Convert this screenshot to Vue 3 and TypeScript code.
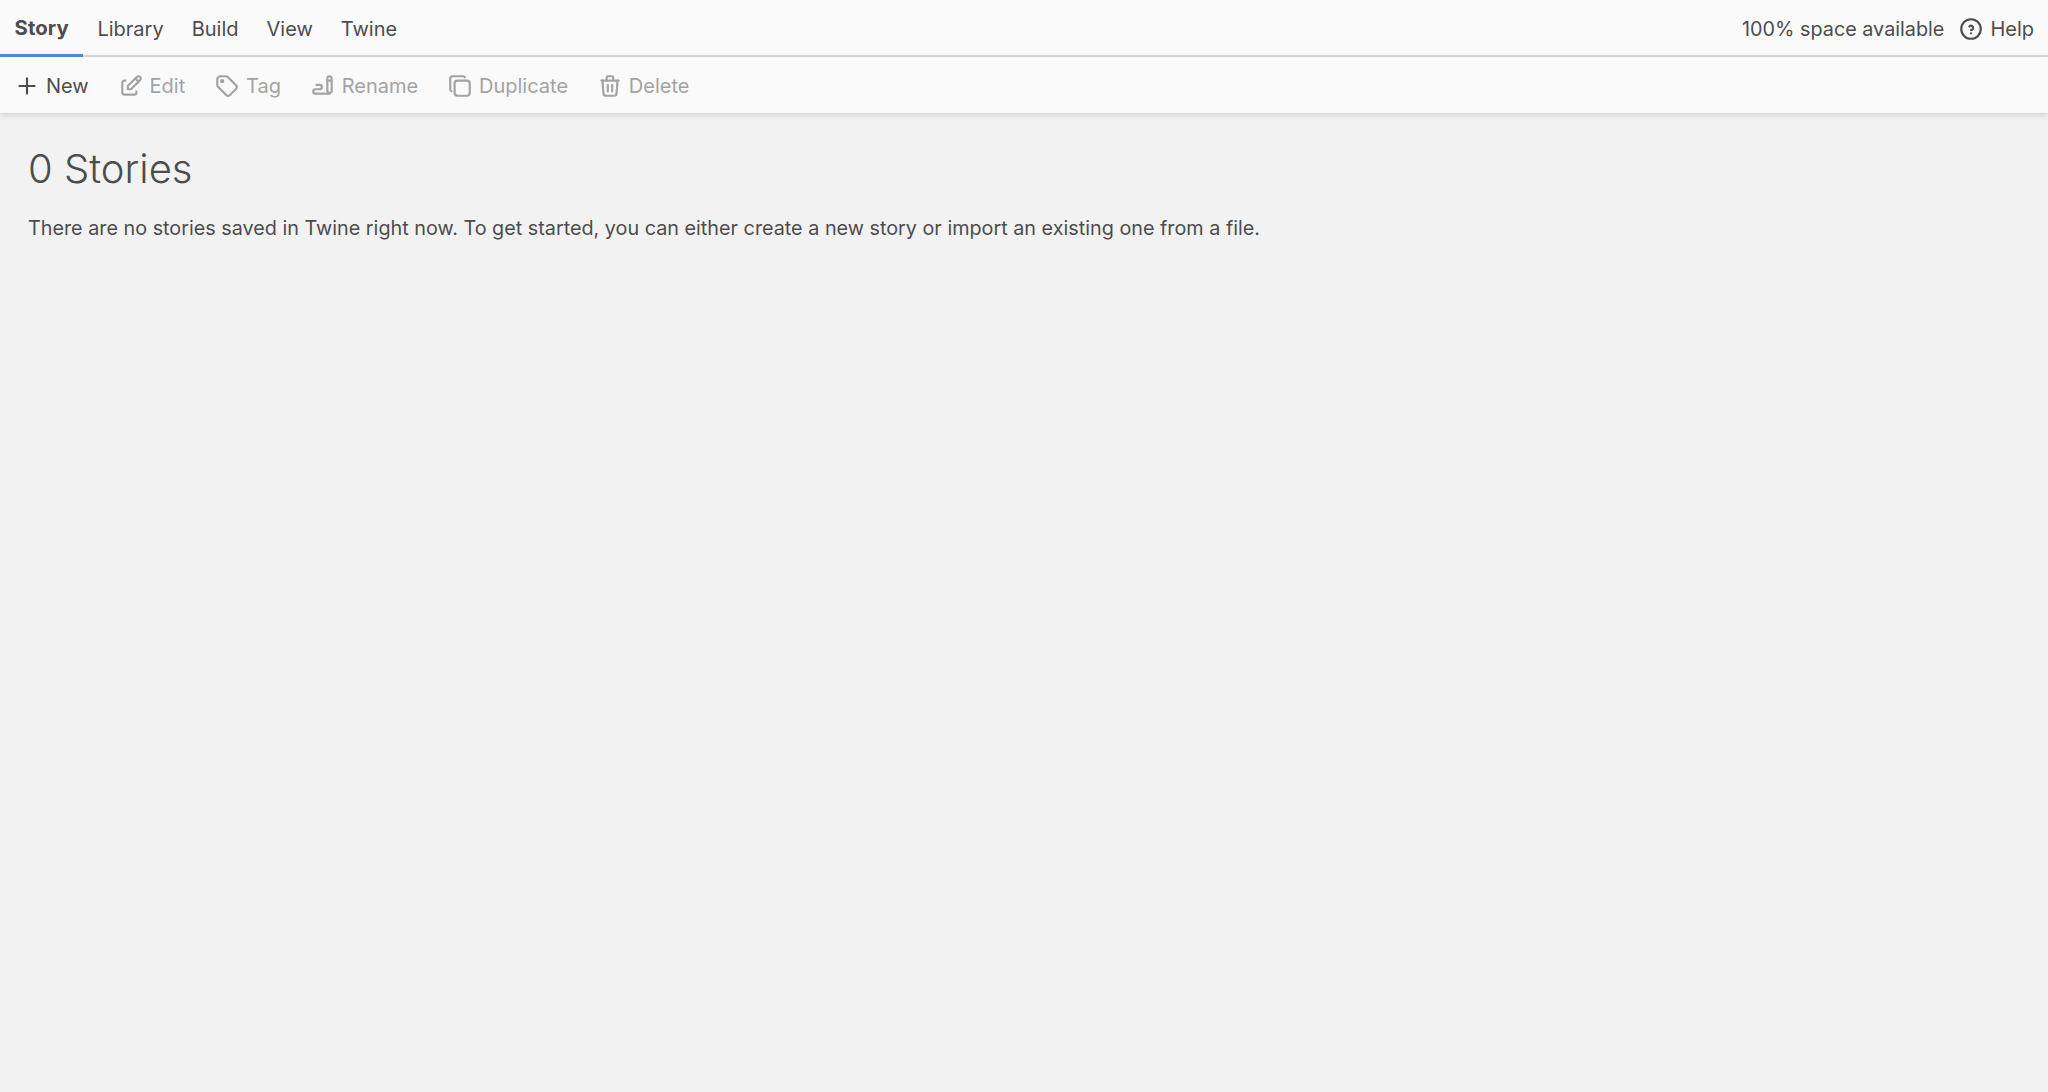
<script setup lang="ts">
const tabs: string[] = ['Story', 'Library', 'Build', 'View', 'Twine']
</script>

<template>
  <div class="page">
    <header class="head">
      <nav class="tabs">
        <span v-for="(t, i) in tabs" :key="t" class="tab" :class="{ active: i === 0 }">{{ t }}</span>
      </nav>
      <div class="right">
        <span class="space">100% space available</span>
        <span class="help">
          <svg class="ico" viewBox="0 0 24 24"><circle cx="12" cy="12" r="9" /><path d="M12 16v.01" /><path d="M12 13a2 2 0 0 0 .914-3.782a1.98 1.98 0 0 0-2.414.483" /></svg>
          Help
        </span>
      </div>
    </header>
    <div class="tools">
      <span class="tool on">
        <svg class="ico" viewBox="0 0 24 24"><path d="M12 5v14M5 12h14" /></svg>New
      </span>
      <span class="tool">
        <svg class="ico" viewBox="0 0 24 24"><path d="M7 7h-1a2 2 0 0 0-2 2v9a2 2 0 0 0 2 2h9a2 2 0 0 0 2-2v-1" /><path d="M20.385 6.585a2.1 2.1 0 0 0-2.97-2.97l-8.415 8.385v3h3l8.385-8.415z" /><path d="M16 5l3 3" /></svg>Edit
      </span>
      <span class="tool">
        <svg class="ico" viewBox="0 0 24 24"><circle cx="7.5" cy="7.5" r="1" /><path d="M3 6v5.172a2 2 0 0 0 .586 1.414l7.71 7.71a2.41 2.41 0 0 0 3.408 0l5.592-5.592a2.41 2.41 0 0 0 0-3.408l-7.71-7.71a2 2 0 0 0-1.414-.586h-5.172a3 3 0 0 0-3 3z" /></svg>Tag
      </span>
      <span class="tool">
        <svg class="ico" viewBox="0 0 24 24"><path d="M20 17v-12c0-1.121-.879-2-2-2s-2 .879-2 2v12l2 2l2-2z" /><path d="M16 7h4" /><path d="M18 19h-13a2 2 0 1 1 0-4h4a2 2 0 1 0 0-4h-3" /></svg>Rename
      </span>
      <span class="tool">
        <svg class="ico" viewBox="0 0 24 24"><path d="M7 9.667a2.667 2.667 0 0 1 2.667-2.667h8.666a2.667 2.667 0 0 1 2.667 2.667v8.666a2.667 2.667 0 0 1-2.667 2.667h-8.666a2.667 2.667 0 0 1-2.667-2.667z" /><path d="M4.012 16.737a2.005 2.005 0 0 1-1.012-1.737v-10c0-1.1.9-2 2-2h10c.75 0 1.158.385 1.5 1" /></svg>Duplicate
      </span>
      <span class="tool">
        <svg class="ico" viewBox="0 0 24 24"><path d="M4 7h16M10 11v6M14 11v6" /><path d="M5 7l1 12a2 2 0 0 0 2 2h8a2 2 0 0 0 2-2l1-12" /><path d="M9 7v-3a1 1 0 0 1 1-1h4a1 1 0 0 1 1 1v3" /></svg>Delete
      </span>
    </div>
    <main class="main">
      <h1>0 Stories</h1>
      <p>There are no stories saved in Twine right now. To get started, you can either create a new story or import an existing one from a file.</p>
    </main>
  </div>
</template>

<style>
html, body { margin: 0; background: #f2f2f2; }
</style>

<style scoped>
.page {
  min-height: 1092px;
  background: #f2f2f2;
  color: #4d4d4d;
  font-family: Inter, "Liberation Sans", sans-serif;
  font-size: 20px;
}
.head {
  height: 55px;
  display: flex;
  justify-content: space-between;
  background: #fafafa;
  border-bottom: 2px solid #d9d9d9;
}
.tabs { display: flex; }
.tab {
  height: 55px;
  box-sizing: border-box;
  padding: 2px 14px 0;
  display: flex;
  align-items: center;
}
.tab.active {
  font-weight: 700;
  font-size: 20.3px;
  border-bottom: 3px solid #4a90e2;
  height: 57px;
  padding: 0 14.6px;
  letter-spacing: 0.1px;
}
.right { display: flex; align-items: center; gap: 14px; padding: 2px 14px 0 0; }
.space { font-size: 19.8px; }
.help { display: flex; align-items: center; gap: 6px; }
.ico {
  width: 26px;
  height: 26px;
  flex: none;
  fill: none;
  stroke: currentColor;
  stroke-width: 2;
  stroke-linecap: round;
  stroke-linejoin: round;
}
.tools {
  height: 56px;
  display: flex;
  align-items: center;
  gap: 28.8px;
  padding: 2px 0 0 14px;
  box-sizing: border-box;
  background: #fafafa;
  box-shadow: 0 2px 6px rgba(0, 0, 0, .15);
  position: relative;
}
.tool { display: flex; align-items: center; gap: 6px; color: #a3a3a3; }
.tool.on { color: #4d4d4d; }
.main { padding: 28px 28px 0; }
h1 {
  margin: 0;
  font-size: 40px;
  font-weight: 300;
  line-height: 56px;
}
p { margin: 16px 0 0; font-size: 19.8px; line-height: 30px; }
</style>
